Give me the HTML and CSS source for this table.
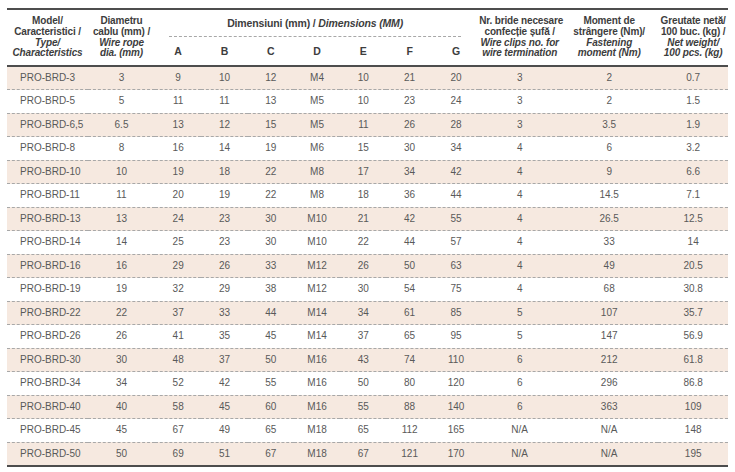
FILE: index.html
```html
<!DOCTYPE html>
<html lang="ro">
<head>
<meta charset="utf-8">
<title>PRO-BRD</title>
<link rel="stylesheet" href="styles.css">
</head>
<body>
<table class="spec">
  <colgroup>
    <col class="c-model">
    <col class="c-diam">
    <col class="c-dim"><col class="c-dim"><col class="c-dim"><col class="c-dim"><col class="c-dim"><col class="c-dim"><col class="c-dim">
    <col class="c-clips">
    <col class="c-moment">
    <col class="c-weight">
  </colgroup>
  <thead>
    <tr class="h1">
      <th rowspan="2">Model/<br>Caracteristici /<br><i>Type/<br>Characteristics</i></th>
      <th rowspan="2">Diametru<br>cablu (mm) /<br><i>Wire rope<br>dia. (mm)</i></th>
      <th colspan="7" class="dims"><div class="dims-title">Dimensiuni (mm) / <i>Dimensions (MM)</i></div></th>
      <th rowspan="2">Nr. bride necesare<br>confecție șufă /<br><i>Wire clips no. for<br>wire termination</i></th>
      <th rowspan="2">Moment de<br>strângere (Nm)/<br><i>Fastening<br>moment (Nm)</i></th>
      <th rowspan="2">Greutate netă/<br>100 buc. (kg) /<br><i>Net weight/<br>100 pcs. (kg)</i></th>
    </tr>
    <tr class="h2">
      <th>A</th><th>B</th><th>C</th><th>D</th><th>E</th><th>F</th><th>G</th>
    </tr>
  </thead>
  <tbody>
    <tr><td>PRO-BRD-3</td><td>3</td><td>9</td><td>10</td><td>12</td><td>M4</td><td>10</td><td>21</td><td>20</td><td>3</td><td>2</td><td>0.7</td></tr>
    <tr><td>PRO-BRD-5</td><td>5</td><td>11</td><td>11</td><td>13</td><td>M5</td><td>10</td><td>23</td><td>24</td><td>3</td><td>2</td><td>1.5</td></tr>
    <tr><td>PRO-BRD-6,5</td><td>6.5</td><td>13</td><td>12</td><td>15</td><td>M5</td><td>11</td><td>26</td><td>28</td><td>3</td><td>3.5</td><td>1.9</td></tr>
    <tr><td>PRO-BRD-8</td><td>8</td><td>16</td><td>14</td><td>19</td><td>M6</td><td>15</td><td>30</td><td>34</td><td>4</td><td>6</td><td>3.2</td></tr>
    <tr><td>PRO-BRD-10</td><td>10</td><td>19</td><td>18</td><td>22</td><td>M8</td><td>17</td><td>34</td><td>42</td><td>4</td><td>9</td><td>6.6</td></tr>
    <tr><td>PRO-BRD-11</td><td>11</td><td>20</td><td>19</td><td>22</td><td>M8</td><td>18</td><td>36</td><td>44</td><td>4</td><td>14.5</td><td>7.1</td></tr>
    <tr><td>PRO-BRD-13</td><td>13</td><td>24</td><td>23</td><td>30</td><td>M10</td><td>21</td><td>42</td><td>55</td><td>4</td><td>26.5</td><td>12.5</td></tr>
    <tr><td>PRO-BRD-14</td><td>14</td><td>25</td><td>23</td><td>30</td><td>M10</td><td>22</td><td>44</td><td>57</td><td>4</td><td>33</td><td>14</td></tr>
    <tr><td>PRO-BRD-16</td><td>16</td><td>29</td><td>26</td><td>33</td><td>M12</td><td>26</td><td>50</td><td>63</td><td>4</td><td>49</td><td>20.5</td></tr>
    <tr><td>PRO-BRD-19</td><td>19</td><td>32</td><td>29</td><td>38</td><td>M12</td><td>30</td><td>54</td><td>75</td><td>4</td><td>68</td><td>30.8</td></tr>
    <tr><td>PRO-BRD-22</td><td>22</td><td>37</td><td>33</td><td>44</td><td>M14</td><td>34</td><td>61</td><td>85</td><td>5</td><td>107</td><td>35.7</td></tr>
    <tr><td>PRO-BRD-26</td><td>26</td><td>41</td><td>35</td><td>45</td><td>M14</td><td>37</td><td>65</td><td>95</td><td>5</td><td>147</td><td>56.9</td></tr>
    <tr><td>PRO-BRD-30</td><td>30</td><td>48</td><td>37</td><td>50</td><td>M16</td><td>43</td><td>74</td><td>110</td><td>6</td><td>212</td><td>61.8</td></tr>
    <tr><td>PRO-BRD-34</td><td>34</td><td>52</td><td>42</td><td>55</td><td>M16</td><td>50</td><td>80</td><td>120</td><td>6</td><td>296</td><td>86.8</td></tr>
    <tr><td>PRO-BRD-40</td><td>40</td><td>58</td><td>45</td><td>60</td><td>M16</td><td>55</td><td>88</td><td>140</td><td>6</td><td>363</td><td>109</td></tr>
    <tr><td>PRO-BRD-45</td><td>45</td><td>67</td><td>49</td><td>65</td><td>M18</td><td>65</td><td>112</td><td>165</td><td>N/A</td><td>N/A</td><td>148</td></tr>
    <tr><td>PRO-BRD-50</td><td>50</td><td>69</td><td>51</td><td>67</td><td>M18</td><td>67</td><td>121</td><td>170</td><td>N/A</td><td>N/A</td><td>195</td></tr>
  </tbody>
</table>
</body>
</html>
```

FILE: styles.css
```css
html, body {
  margin: 0;
  padding: 0;
  background: #ffffff;
}

body {
  padding: 8px 7px 0 7px;
  font-family: "Liberation Sans", Arial, sans-serif;
}

.spec {
  width: 721px;
  table-layout: fixed;
  border-collapse: collapse;
  border-top: 2px solid #4d4d4d;
  border-bottom: 2px solid #4d4d4d;
  font-size: 10px;
  color: #595959;
}

.c-model { width: 81px; }
.c-diam { width: 67px; }
.c-dim { width: 46.3px; }
.c-clips { width: 81px; }
.c-moment { width: 98px; }
.c-weight { width: 70px; }

.spec thead {
  border-bottom: 2px solid #4d4d4d;
}

.spec th {
  font-weight: bold;
  color: #3d3d3d;
  line-height: 10.7px;
  text-align: center;
  vertical-align: middle;
  padding: 0;
  white-space: nowrap;
  letter-spacing: -0.15px;
}

.spec th i {
  font-style: italic;
}

.h1 {
  height: 28px;
}

.h2 {
  height: 29px;
}

.h2 th {
  padding-top: 1px;
  font-size: 10.5px;
  letter-spacing: 0;
}

.spec th.dims {
  vertical-align: bottom;
  padding: 0 18px 0 14px;
}

.dims-title {
  font-size: 10.5px;
  padding-bottom: 7px;
  border-bottom: 1px dashed #a8a8a8;
}

.spec tbody tr {
  height: 23.5px;
  border-top: 1px dashed #a8a8a8;
}

.spec tbody tr:first-child {
  border-top: none;
}

.spec tbody tr:nth-child(odd) {
  background: #f6e9e0;
}

.spec td {
  text-align: center;
  padding: 0;
  vertical-align: middle;
  line-height: 12px;
}

.spec td:first-child {
  text-align: left;
  padding-left: 13px;
}
```
